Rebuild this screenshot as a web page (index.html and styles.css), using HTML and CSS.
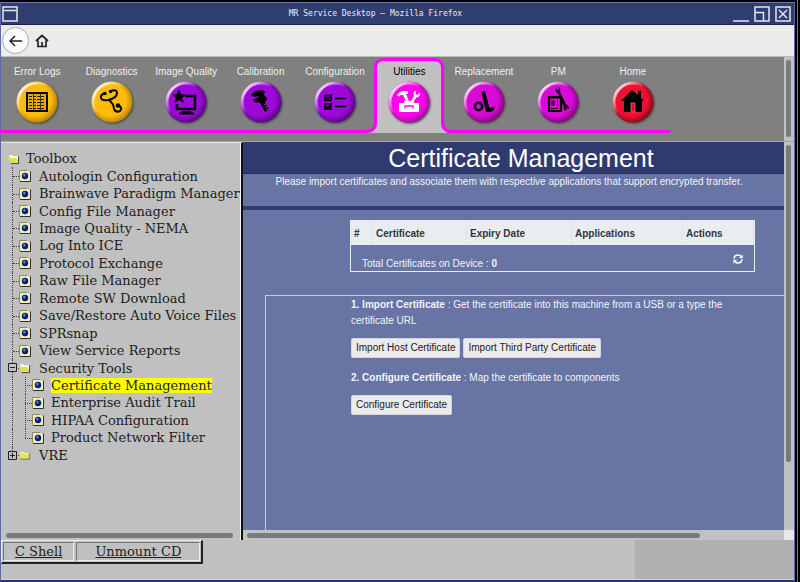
FILE: index.html
```html
<!DOCTYPE html>
<html lang="en">
<head>
<meta charset="utf-8">
<title>MR Service Desktop</title>
<link rel="stylesheet" href="styles.css">
</head>
<body>
<svg class="defs" aria-hidden="true">
  <defs>
    <radialGradient id="gold" cx=".45" cy=".45" r=".56"><stop offset=".7" stop-color="#fdbb0c"/><stop offset="1" stop-color="#b98407"/></radialGradient>
    <radialGradient id="violet" cx=".45" cy=".45" r=".56"><stop offset=".7" stop-color="#9c09d8"/><stop offset="1" stop-color="#5c0785"/></radialGradient>
    <radialGradient id="magenta" cx=".45" cy=".45" r=".56"><stop offset=".7" stop-color="#d80ad5"/><stop offset="1" stop-color="#850783"/></radialGradient>
    <radialGradient id="pink" cx=".45" cy=".45" r=".56"><stop offset=".7" stop-color="#fb08ea"/><stop offset="1" stop-color="#b009a8"/></radialGradient>
    <radialGradient id="red" cx=".45" cy=".45" r=".56"><stop offset=".7" stop-color="#ef1133"/><stop offset="1" stop-color="#8c0a1d"/></radialGradient>
    <linearGradient id="shine" x1="0" y1="0" x2="1" y2="1"><stop offset=".1" stop-color="#fff" stop-opacity=".9"/><stop offset=".45" stop-color="#fff" stop-opacity="0"/></linearGradient>
    <g id="gloss"><circle cx="21" cy="21" r="19" fill="none" stroke="url(#shine)" stroke-width="3"/></g>
    <symbol id="page" viewBox="0 0 12 12"><path d="M1 1h7l3 1v9H1z" fill="#efefb0"/><path d="M1 11.5h10.500V1.500" fill="none" stroke="#303030"/><path d="M.5 11V.5H8" fill="none" stroke="#8c8c60"/><circle cx="6" cy="6" r="3.200" fill="#101a80"/><path d="M4 4.500l2-1 .5 2-1.500 1.500z" fill="#3aa7b0"/></symbol>
    <symbol id="folder-open" viewBox="0 0 13 12"><path d="M1 2h4l1 1h5v7H3z" fill="#fbfbe0"/><path d="M0 5h9l3 5H3z" fill="#dede50"/><path d="M11.500 3v8H3" fill="none" stroke="#333"/></symbol>
    <symbol id="folder" viewBox="0 0 13 12"><path d="M1 3h4l1 1h5v6H1z" fill="#e4e45a"/><path d="M1 3.500h4l1 1h5" fill="none" stroke="#fafab8"/><path d="M11.500 4v6.500H1" fill="none" stroke="#77773a"/></symbol>
  </defs>
</svg>
<div class="window">
  <header class="titlebar">
    <svg class="win-menu" width="16" height="16" viewBox="0 0 16 16"><path d="M1 1h14v14H1zM1 4.500h14" fill="none" stroke="#e4e7f4" stroke-width="1.500"/></svg>
    <div class="window-title">MR Service Desktop – Mozilla Firefox</div>
    <div class="window-buttons">
      <button aria-label="Minimize"><svg width="16" height="16" viewBox="0 0 16 16"><path d="M0 15h16"/></svg></button>
      <button aria-label="Maximize"><svg width="16" height="16" viewBox="0 0 16 16"><path d="M1 1h14v14H1zM1 6.500h8.500V15"/></svg></button>
      <button aria-label="Close"><svg width="16" height="16" viewBox="0 0 16 16"><path d="M1 1h14v14H1zM4 4l8 8M12 4l-8 8"/></svg></button>
    </div>
  </header>
  <div class="toolbar">
    <button class="back" aria-label="Back"><svg width="14" height="12" viewBox="0 0 14 12"><path d="M13 6H1M6 1L1 6l5 5" fill="none" stroke="#222" stroke-width="1.500"/></svg></button>
    <button class="go-home" aria-label="Home page"><svg width="14" height="14" viewBox="0 0 14 14"><path d="M1 7l6-5.500L13 7M3 6.500V12.500h8V6.500M7 8v4.500" fill="none" stroke="#222" stroke-width="1.700"/></svg></button>
  </div>
  <div class="topframe">
    <nav class="tabs">
      <a href="#" class="tab"><span>Error Logs</span><svg class="orb" viewBox="0 0 42 42"><circle cx="21" cy="21" r="20.500" fill="url(#gold)"/><use href="#gloss"/><rect x="11" y="12" width="20" height="18" fill="#e6a90b" stroke="#000" stroke-width="2"/><path d="M13 15.500h16M13 18.500h16M13 21.500h16M13 24.500h16M13 27.500h16" stroke="#201800" stroke-width="1.200" stroke-dasharray="3 1"/><path d="M17.500 13v16M24.500 13v16" stroke="#201800" stroke-width=".8"/></svg></a>
      <a href="#" class="tab"><span>Diagnostics</span><svg class="orb" viewBox="0 0 42 42"><circle cx="21" cy="21" r="20.500" fill="url(#gold)"/><use href="#gloss"/><g fill="none" stroke="#000" stroke-width="2"><path d="M14 12q-5 2-4 5 1 3 7 2 9-2 9-7 0-4-6-2"/><path d="M18 19q5 4 5 9 2 4 6 2 3-3-1-5"/></g><circle cx="14" cy="12.500" r="1.700"/><circle cx="19.500" cy="10.500" r="1.700"/><circle cx="27" cy="24.500" r="2.300"/></svg></a>
      <a href="#" class="tab"><span>Image Quality</span><svg class="orb" viewBox="0 0 42 42"><circle cx="21" cy="21" r="20.500" fill="url(#violet)"/><use href="#gloss"/><path d="M20 15h10v13H12v-5" fill="none" stroke="#000" stroke-width="2.500"/><path d="M14 8l2 5 5 .5-4 3.500 2 5-5-3-5 3 2-5-4-3.500 5-.5zM17 30h9v1.500h3v2H14v-2h3z"/></svg></a>
      <a href="#" class="tab"><span>Calibration</span><svg class="orb" viewBox="0 0 42 42"><circle cx="21" cy="21" r="20.500" fill="url(#violet)"/><use href="#gloss"/><path d="M11 14.500q0-2 4-4 5-2 9-1l1 2.500q-2 2.500-6 3-6 1.500-8-.5zM13 20q1-2.500 5-3.500 4-1.500 8.500-.5l.5 3q-2 2-6 2-5 1.500-8-1z"/><path d="M19 20l5-2 5 10.500-4 2.500z"/><path d="M18.500 15l5-2 2 3-6 2z"/><path d="M24 24l3-1.500M25 26.500l3-1.500M26 29l3-1.500" stroke="#b060d0" stroke-width=".8"/></svg></a>
      <a href="#" class="tab"><span>Configuration</span><svg class="orb" viewBox="0 0 42 42"><circle cx="21" cy="21" r="20.500" fill="url(#violet)"/><use href="#gloss"/><path d="M11 14.500h6v5h-6zM11 23h6v5h-6zM12 16l2 2 4-5M12 25l2 2 4-5M21 17.500h11M21 25.500h11" fill="none" stroke="#000" stroke-width="1.500"/></svg></a>
      <a href="#" class="tab active" aria-current="page"><svg class="outline" viewBox="0 0 92 76" preserveAspectRatio="none"><path d="M0 76V74.500H2Q11.500 74.500 11.500 65V11Q11.500 2.500 20 2.500H70Q78.500 2.500 78.500 11V65Q78.500 74.500 88 74.500H92V76z" fill="#c0c0c0"/><path d="M0 74.500H2Q11.500 74.500 11.500 65V11Q11.500 2.500 20 2.500H70Q78.500 2.500 78.500 11V65Q78.500 74.500 88 74.500H92" fill="none" stroke="#f0f" stroke-width="3"/></svg><span>Utilities</span><svg class="orb" viewBox="0 0 42 42"><circle cx="21" cy="21" r="20.500" fill="url(#pink)"/><use href="#gloss"/><g fill="#fff"><path d="M11 22h20v9H11z"/><path d="M9 14.500q2-4 6-4.500h5v3h-2l3 7h-3l-3-6q-2-1-4 1.500z"/><path d="M23 20l3-5q-1.500-3.500 2-5.500l-.5 3.500 2 1 2.500-2.500q.5 4.500-3.500 5L26 20z"/><path d="M16 20h10v2H16z"/></g><path d="M17 27.500V25h8v2.500" fill="none" stroke="#fb08ea" stroke-width="1.300"/></svg></a>
      <a href="#" class="tab"><span>Replacement</span><svg class="orb" viewBox="0 0 42 42"><circle cx="21" cy="21" r="20.500" fill="url(#magenta)"/><use href="#gloss"/><circle cx="15.500" cy="25.500" r="3.700" fill="none" stroke="#000" stroke-width="2.600"/><path d="M18.500 12q1-2.500 3.500-1.500L26.500 27l5-1.500v2L30 30l-5 1.500-2-1z"/></svg></a>
      <a href="#" class="tab"><span>PM</span><svg class="orb" viewBox="0 0 42 42"><circle cx="21" cy="21" r="20.500" fill="url(#magenta)"/><use href="#gloss"/><path d="M12 16h12v14H12zM12 16.500h12" fill="none" stroke="#000" stroke-width="2.200"/><path d="M14 20h3v4h-3M14 22h3M20.500 19.500v5M14 27.500h7" fill="none" stroke="#000"/><path d="M19 7q-1 4 2 5l6 14q-1 3 2 3.500l1-2.500 2 1q0-4-3-4.500L23 11q1-4-2-5l1 3-1.500.500z"/></svg></a>
      <a href="#" class="tab"><span>Home</span><svg class="orb" viewBox="0 0 42 42"><circle cx="21" cy="21" r="20.500" fill="url(#red)"/><use href="#gloss"/><path d="M9 20L20 9l6 5v-4h3v7l3 3h-2v11H12V20z"/><path d="M19 31v-9h4v9z" fill="#d81030" stroke="#ff8a90" stroke-width=".6"/></svg></a>
    </nav>
    <div class="vscroll"><div class="thumb top-thumb"></div></div>
  </div>
  <div class="frames">
    <aside class="sidebar">
      <div class="tree" role="tree">
        <div class="row root" role="treeitem"><svg class="ico"><use href="#folder-open"/></svg><a href="#">Toolbox</a></div>
        <div class="row" role="treeitem"><svg class="ico"><use href="#page"/></svg><a href="#">Autologin Configuration</a></div>
        <div class="row" role="treeitem"><svg class="ico"><use href="#page"/></svg><a href="#">Brainwave Paradigm Manager</a></div>
        <div class="row" role="treeitem"><svg class="ico"><use href="#page"/></svg><a href="#">Config File Manager</a></div>
        <div class="row" role="treeitem"><svg class="ico"><use href="#page"/></svg><a href="#">Image Quality - NEMA</a></div>
        <div class="row" role="treeitem"><svg class="ico"><use href="#page"/></svg><a href="#">Log Into ICE</a></div>
        <div class="row" role="treeitem"><svg class="ico"><use href="#page"/></svg><a href="#">Protocol Exchange</a></div>
        <div class="row" role="treeitem"><svg class="ico"><use href="#page"/></svg><a href="#">Raw File Manager</a></div>
        <div class="row" role="treeitem"><svg class="ico"><use href="#page"/></svg><a href="#">Remote SW Download</a></div>
        <div class="row" role="treeitem"><svg class="ico"><use href="#page"/></svg><a href="#">Save/Restore Auto Voice Files</a></div>
        <div class="row" role="treeitem"><svg class="ico"><use href="#page"/></svg><a href="#">SPRsnap</a></div>
        <div class="row" role="treeitem"><svg class="ico"><use href="#page"/></svg><a href="#">View Service Reports</a></div>
        <div class="row" role="treeitem" aria-expanded="true"><button class="toggle" aria-label="Collapse"><svg width="9" height="9" viewBox="0 0 9 9"><path d="M.5 .5h8v8h-8zM2 4.500h5"/></svg></button><svg class="ico"><use href="#folder-open"/></svg><a href="#">Security Tools</a></div>
        <div class="row sub" role="treeitem"><svg class="ico"><use href="#page"/></svg><a href="#" class="current">Certificate Management</a></div>
        <div class="row sub" role="treeitem"><svg class="ico"><use href="#page"/></svg><a href="#">Enterprise Audit Trail</a></div>
        <div class="row sub" role="treeitem"><svg class="ico"><use href="#page"/></svg><a href="#">HIPAA Configuration</a></div>
        <div class="row sub end" role="treeitem"><svg class="ico"><use href="#page"/></svg><a href="#">Product Network Filter</a></div>
        <div class="row last" role="treeitem" aria-expanded="false"><button class="toggle" aria-label="Expand"><svg width="9" height="9" viewBox="0 0 9 9"><path d="M.5 .5h8v8h-8zM2 4.500h5M4.500 2v5"/></svg></button><svg class="ico"><use href="#folder"/></svg><a href="#">VRE</a></div>
      </div>
      <div class="hscroll"><div class="thumb side-thumb"></div></div>
    </aside>
    <main class="pane">
      <div class="content">
        <h1>Certificate Management</h1>
        <p class="intro">Please import certificates and associate them with respective applications that support encrypted transfer.</p>
        <table class="certs">
          <thead><tr><th class="c-num">#</th><th class="c-cert">Certificate</th><th class="c-date">Expiry Date</th><th class="c-app">Applications</th><th>Actions</th></tr></thead>
          <tbody><tr><td colspan="5"><div class="summary"><span>Total Certificates on Device : <b>0</b></span>
            <button class="refresh" aria-label="Refresh"><svg width="10" height="10" viewBox="0 0 10 10"><path d="M1 4.500Q1.500 1 5 1q2 0 3 1.500M9 5.500Q8.500 9 5 9 3 9 2 7.500" fill="none" stroke="#fff" stroke-width="1.700"/><path d="M9.700 .5v3.700H6zM.3 9.500V5.800H4z" fill="#fff"/></svg></button></div></td></tr></tbody>
        </table>
        <section class="steps">
          <p><b>1. Import Certificate</b> : Get the certificate into this machine from a USB or a type the certificate URL</p>
          <div class="actions"><button>Import Host Certificate</button><button>Import Third Party Certificate</button></div>
          <p><b>2. Configure Certificate</b> : Map the certificate to components</p>
          <div class="actions"><button>Configure Certificate</button></div>
        </section>
      </div>
      <div class="vscroll"><div class="thumb main-thumb"></div></div>
      <div class="hscroll"><div class="thumb pane-thumb"></div></div>
      <div class="corner"></div>
    </main>
  </div>
  <footer class="bottom">
    <div class="commands"><a href="#" class="shell">C Shell</a><a href="#" class="unmount">Unmount CD</a></div>
    <div class="status"></div>
  </footer>
</div>
</body>
</html>
```

FILE: styles.css
```css
* { box-sizing: border-box; }
html, body { margin: 0; height: 100%; }
body {
  background: linear-gradient(#777, #777) right 2px top 0 / 1px 100% no-repeat #000;
  padding: 2px 5px 0 0;
  font-family: "Liberation Sans", Arial, sans-serif;
  font-size: 10px;
}
button { font: inherit; padding: 0; border: 0; background: none; color: inherit; }
svg { display: block; flex: none; }
a { color: inherit; text-decoration: none; }
.defs { position: absolute; width: 0; height: 0; }

.window {
  display: grid;
  grid-template-rows: 23px 32px 85px 1fr 40px;
  height: 100%;
  border: 1px solid #5b6ba5;
  border-top-width: 0;
  border-bottom: 2px solid #26356f;
  background: #c0c0c0;
}

.titlebar {
  display: flex;
  align-items: center;
  padding: 0 3px 0 1px;
  background: #2f3d70;
  border-top: 1px solid #6877b0;
  border-bottom: 1px solid #17234e;
  color: #eceef8;
}
.window-title { flex: 1; text-align: center; font: 8px "DejaVu Sans Mono", monospace; }
.window-buttons { display: flex; gap: 5px; }
.window-buttons path { fill: none; stroke: #e4e7f4; stroke-width: 1.5; }

.toolbar {
  display: flex;
  align-items: center;
  gap: 6px;
  padding: 0 1px;
  background: #ebebe9;
  border-bottom: 1px solid #bdbdb9;
}
.back { display: grid; place-items: center; width: 27px; height: 27px; border: 1px solid #aaa; border-radius: 50%; background: #fbfbfb; }

.topframe { display: flex; justify-content: space-between; background: #808080; border-bottom: 1px solid #a4a4a0; }
.tabs { display: grid; grid-template-columns: repeat(9, 1fr); width: 670px; height: 76px; margin-left: -1px; }
.tab {
  position: relative;
  display: flex;
  flex-direction: column;
  align-items: center;
  gap: 3px;
  padding-top: 9px;
  border-bottom: 3px solid #f0f;
  color: #f0f0f0;
  line-height: 12px;
  white-space: nowrap;
}
.tab.active { color: #000; border-color: #c0c0c0; }
.tab span, .orb { position: relative; }
.orb { width: 42px; height: 42px; filter: drop-shadow(1px 1px 1px #444); }
.outline { position: absolute; left: -8px; top: 0; width: 92px; height: 76px; }

.vscroll { width: 10px; padding: 3px 2px; background: #c0c2c2; }
.hscroll { height: 10px; padding: 3px 4px; background: #c0c2c2; }
.thumb { border-radius: 3px; background: #777b7b; }
.vscroll .thumb { width: 5px; }
.hscroll .thumb { height: 5px; }
.top-thumb { height: 77px; }
.main-thumb { height: 83%; }
.side-thumb { width: 99%; }
.pane-thumb { width: 85%; }

.frames { display: grid; grid-template-columns: 242px minmax(0, 1fr); min-height: 0; }
.sidebar {
  display: flex;
  flex-direction: column;
  justify-content: space-between;
  min-width: 0;
  padding: 7px 2px 0 1px;
  border-top: 1px solid #e4e4e4;
  border-right: 2px solid #111;
  box-shadow: inset -1px 0 #f4f4f4;
  font: 13px "DejaVu Serif", serif;
  color: #202020;
}
.tree { display: grid; grid-auto-rows: 1fr; height: 314px; }
.row { position: relative; display: flex; align-items: center; padding-left: 17px; gap: 8px; white-space: nowrap; }
.row::before { content: ""; position: absolute; left: 10px; top: 0; bottom: 0; border-left: 1px dotted #444; }
.row::after { content: ""; position: absolute; left: 11px; top: 50%; width: 6px; border-top: 1px dotted #444; }
.row.root { padding-left: 6px; gap: 6px; }
.root::before, .root::after { display: none; }
.row.last::before { bottom: 50%; }
.row.sub { padding-left: 30px; gap: 7px; background: repeating-linear-gradient(#444 0 1px, transparent 1px 2px) 23px 0 / 1px 100% no-repeat; }
.row.sub::after { left: 23px; width: 7px; }
.row.sub.end { background-size: 1px 50%; }
.ico { width: 12px; height: 12px; }
.row a { line-height: 15px; }
.current { background: #ff0; }
.toggle { position: absolute; z-index: 1; left: 6px; top: 4px; }
.toggle path { fill: #c0c0c0; stroke: #222; }

.pane {
  display: grid;
  grid-template-columns: minmax(0, 1fr) 10px;
  grid-template-rows: minmax(0, 1fr) 10px;
  min-height: 0;
}
.content {
  display: flex;
  flex-direction: column;
  background: #6874a3;
  color: #f2f4fb;
  overflow: hidden;
}
h1 {
  margin: 0;
  padding: 0 0 0 15px;
  height: 32px;
  line-height: 32px;
  background: #2f3b6e;
  border-bottom: 1px solid #222d5b;
  color: #fff;
  font-size: 25px;
  font-weight: 400;
  text-align: center;
}
.intro { margin: 0; height: 36px; padding-right: 9px; border-bottom: 4px solid #2f3b6e; line-height: 16px; text-align: center; }
.certs { margin: 10px 29px 0 107px; border: 1px solid #e9edf2; border-spacing: 0; table-layout: fixed; }
th { height: 24px; padding: 0 3px; background: #e9edf0; border-right: 1px solid #dfe3e6; color: #30363d; text-align: left; }
.c-num { width: 22px; }
.c-cert { width: 94px; }
.c-date { width: 105px; }
.c-app { width: 111px; }
td { height: 26px; padding: 2px 11px 0; }
.summary { display: flex; justify-content: space-between; align-items: flex-end; height: 20px; }
.refresh { padding-bottom: 5px; }
.steps { flex: 1; margin: 23px 0 0 22px; padding: 1px 29px 0 85px; border: 1px solid #c5cbe3; border-width: 1px 0 0 1px; line-height: 16px; }
.steps p { margin: 0; }
.actions { display: flex; gap: 3px; padding: 9px 0 12px; }
.actions button { height: 20px; padding: 0 4px; border: 1px solid #d5d5d5; border-radius: 2px; background: #ebebeb; color: #222; }
.corner { background: #e8e8e8; }

.bottom { display: grid; grid-template-columns: 1fr 20%; align-items: start; border-bottom: 1px solid #d8d8c8; }
.status { height: 100%; background: #b0b0b0; }
.commands { display: inline-flex; justify-self: start; gap: 2px; padding: 1px 1px 1px 1px; border: 1px solid #eee; border-width: 1px 2px 2px 1px; border-right-color: #222; border-bottom-color: #222; font: 13px "DejaVu Serif", serif; color: #202020; }
.commands a { padding: 0 11px; border: 1px solid #777; border-right-color: #eee; border-bottom-color: #eee; line-height: 17px; text-decoration: underline; }
.commands .unmount { padding: 0 18px; }
```
